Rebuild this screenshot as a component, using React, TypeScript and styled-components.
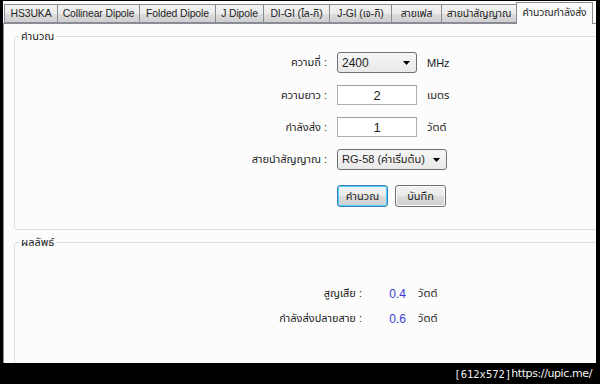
import React from 'react';
import styled, { createGlobalStyle } from 'styled-components';

const GlobalStyle = createGlobalStyle`
  html, body {
    margin: 0;
    padding: 0;
    background: #000;
  }
  * {
    box-sizing: border-box;
  }
`;

const FONT = `"Liberation Sans", "Noto Sans Thai", "Noto Sans", Tahoma, sans-serif`;

const Screen = styled.div`
  width: 600px;
  height: 384px;
  background: #000;
  display: flex;
  flex-direction: column;
  padding: 1px 4px 0 3px;
  font-family: ${FONT};
  font-size: 11px;
  color: #1e1e1e;
  overflow: hidden;
`;

const Window = styled.div`
  flex: 1;
  display: flex;
  flex-direction: column;
  background: #fff;
  overflow: hidden;
`;

const TabStrip = styled.div`
  display: flex;
  align-items: flex-end;
  height: 22px;
  padding-left: 1px;
`;

const Tab = styled.div<{ $w: number; $active?: boolean }>`
  width: ${(p) => p.$w}px;
  height: ${(p) => (p.$active ? 22 : 19)}px;
  margin-right: -1px;
  display: flex;
  align-items: center;
  justify-content: center;
  white-space: nowrap;
  font-size: 10.4px;
  letter-spacing: -0.1px;
  border: 1px solid #898c95;
  border-bottom: ${(p) => (p.$active ? 'none' : '1px solid #898c95')};
  background: ${(p) =>
    p.$active ? '#fcfcfc' : 'linear-gradient(#f3f3f3 0%, #ebebeb 50%, #dddddd 51%, #cfcfcf 100%)'};
  padding-bottom: ${(p) => (p.$active ? 2 : 0)}px;
  position: relative;
  z-index: ${(p) => (p.$active ? 1 : 0)};
  margin-bottom: ${(p) => (p.$active ? -1 : 0)}px;
  overflow: hidden;
  flex-shrink: 0;
`;

const Panel = styled.div`
  flex: 1;
  width: 640px;
  margin-bottom: -30px;
  border: 1px solid #898c95;
  background: #fcfcfc;
  padding: 6px 0 0 10px;
  display: flex;
  flex-direction: column;
`;

const GroupBox = styled.fieldset<{ $top?: number; $grow?: boolean }>`
  width: 620px;
  margin: ${(p) => p.$top ?? 0}px 0 0 0;
  padding: 9px 0 22px 0;
  border: 1px solid #d5dfe5;
  border-radius: 3px;
  min-width: 0;
  flex: ${(p) => (p.$grow ? 1 : 'none')};
`;

const Legend = styled.legend`
  margin-left: 4px;
  padding: 0 2px;
  line-height: 13px;
  font-size: 11px;
  color: #1e1e1e;
`;

const FormGrid = styled.div`
  display: grid;
  grid-template-columns: 312px 80px auto;
  column-gap: 10px;
  row-gap: 12px;
  align-items: center;
`;

const Label = styled.div`
  text-align: right;
  white-space: nowrap;
`;

const Unit = styled.div`
  white-space: nowrap;
`;

const TextBox = styled.div`
  height: 20px;
  width: 80px;
  border: 1px solid #abadb3;
  border-top-color: #9a9da6;
  background: #fff;
  display: flex;
  align-items: center;
  justify-content: center;
  font-size: 13px;
`;

const Combo = styled.div<{ $w: number; $small?: boolean }>`
  height: 21px;
  width: ${(p) => p.$w}px;
  border: 1px solid #707070;
  border-radius: 3px;
  background: linear-gradient(#f6f6f6, #e9e9e9);
  display: flex;
  align-items: center;
  justify-content: space-between;
  padding: 0 6px 0 4px;
  font-size: ${(p) => (p.$small ? 11 : 12)}px;
  white-space: nowrap;
`;

const Arrow = () => (
  <svg width="7" height="4" viewBox="0 0 7 4">
    <path d="M0 0 H7 L3.5 4 Z" fill="#000" />
  </svg>
);

const ButtonRow = styled.div`
  grid-column: 2 / 4;
  display: flex;
  gap: 7px;
  margin-top: 3px;
`;

const Button = styled.button<{ $focus?: boolean }>`
  width: 51px;
  height: 22px;
  padding: 0;
  font-family: ${FONT};
  font-size: 11px;
  color: #1e1e1e;
  border-radius: 3px;
  border: 1px solid ${(p) => (p.$focus ? '#3c7fb1' : '#707070')};
  background: linear-gradient(#f2f2f2 0%, #ebebeb 50%, #dddddd 51%, #cfcfcf 100%);
  box-shadow: ${(p) => (p.$focus ? 'inset 0 0 0 1px #48d1ff' : 'inset 0 0 0 1px #fcfcfc')};
`;

const ResultGrid = styled.div`
  display: grid;
  grid-template-columns: 347px 44px auto;
  row-gap: 8px;
  align-items: center;
  padding-top: 27px;
`;

const Value = styled.div`
  color: #3a3ad6;
  font-size: 12px;
  text-align: right;
  line-height: 16px;
`;

const ResultUnit = styled(Unit)`
  margin-left: 12px;
`;

const Footer = styled.div`
  height: 21px;
  display: flex;
  align-items: center;
  justify-content: flex-end;
  padding-right: 4px;
  color: #f4f4f4;
  font-size: 12px;
  position: relative;
  z-index: 2;
  background: #000;
`;

const Mono = styled.span`
  font-family: "DejaVu Sans Mono", monospace;
  font-size: 10.5px;
`;

const Url = styled.span`
  font-family: "DejaVu Sans", sans-serif;
  font-size: 11px;
  letter-spacing: -0.4px;
`;

const tabs: { label: string; w: number }[] = [
  { label: 'HS3UKA', w: 54 },
  { label: 'Collinear Dipole', w: 83 },
  { label: 'Folded Dipole', w: 77 },
  { label: 'J Dipole', w: 49 },
  { label: 'DI-GI (ไล-กิ)', w: 67 },
  { label: 'J-GI (เจ-กิ)', w: 63 },
  { label: 'สายเฟส', w: 51 },
  { label: 'สายนำสัญญาณ', w: 76 },
];

const App = () => {
  return (
    <Screen>
      <GlobalStyle />
      <Window>
        <TabStrip>
          {tabs.map((t) => (
            <Tab key={t.label} $w={t.w}>
              {t.label}
            </Tab>
          ))}
          <Tab $w={77} $active>
            คำนวณกำลังส่ง
          </Tab>
        </TabStrip>
        <Panel>
          <GroupBox>
            <Legend>คำนวณ</Legend>
            <FormGrid>
              <Label>ความถี่ :</Label>
              <Combo $w={80}>
                <span>2400</span>
                <Arrow />
              </Combo>
              <Unit>MHz</Unit>

              <Label>ความยาว :</Label>
              <TextBox>2</TextBox>
              <Unit>เมตร</Unit>

              <Label>กำลังส่ง :</Label>
              <TextBox>1</TextBox>
              <Unit>วัตต์</Unit>

              <Label>สายนำสัญญาณ :</Label>
              <Combo $w={110} $small>
                <span>RG-58 (ค่าเริ่มต้น)</span>
                <Arrow />
              </Combo>
              <Unit />

              <ButtonRow>
                <Button $focus>คำนวณ</Button>
                <Button>บันทึก</Button>
              </ButtonRow>
            </FormGrid>
          </GroupBox>
          <GroupBox $top={6} $grow>
            <Legend>ผลลัพธ์</Legend>
            <ResultGrid>
              <Label>สูญเสีย :</Label>
              <Value>0.4</Value>
              <ResultUnit>วัตต์</ResultUnit>
              <Label>กำลังส่งปลายสาย :</Label>
              <Value>0.6</Value>
              <ResultUnit>วัตต์</ResultUnit>
            </ResultGrid>
          </GroupBox>
        </Panel>
      </Window>
      <Footer>
        <Mono>[612x572]</Mono>
        <Url>https://upic.me/</Url>
      </Footer>
    </Screen>
  );
};

export default App;
